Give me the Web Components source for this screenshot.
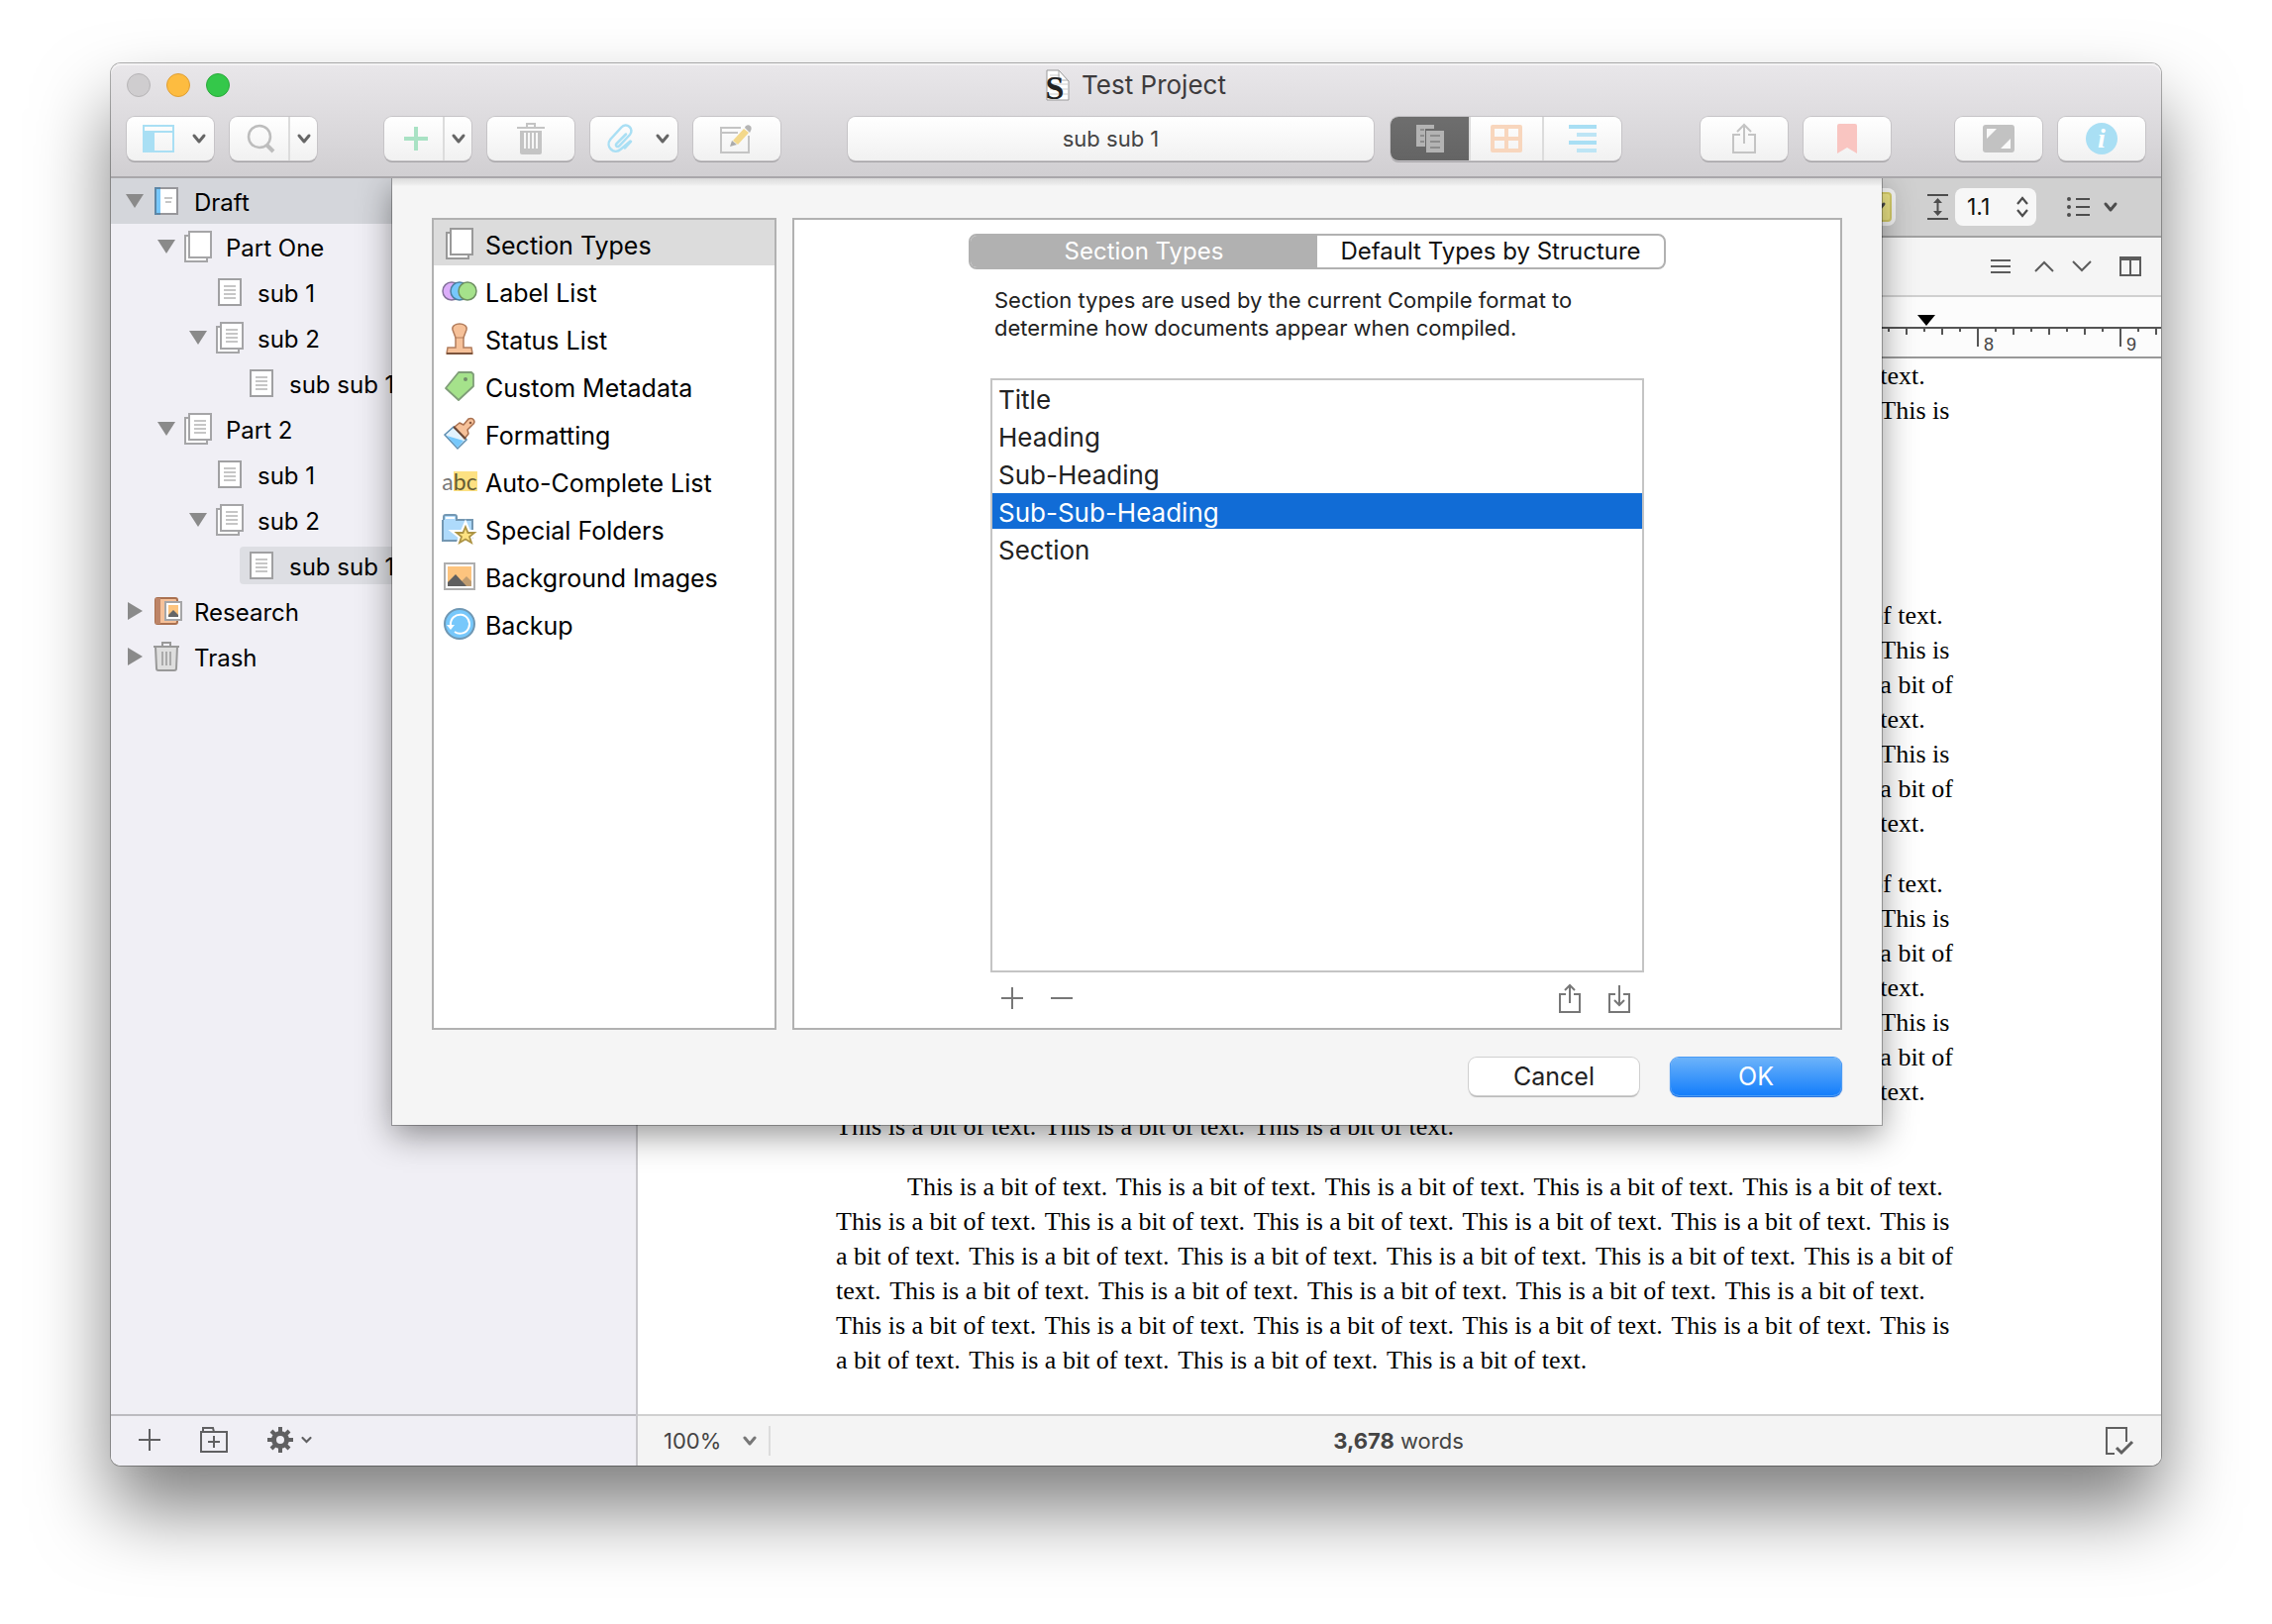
<!DOCTYPE html>
<html lang="en">
<head>
<meta charset="utf-8">
<title>Test Project</title>
<style>
  html, body { margin: 0; background: #fff; }
  body {
    font-family: Inter, "Liberation Sans", sans-serif;
    color: #000;
    box-sizing: border-box;
    min-height: 100vh;
    padding: 64px 112px 160px;
    display: flex;
  }
</style>
</head>
<body>
<project-window></project-window>
<script>
const define = (name, css, html, setup) => {
  const tpl = document.createElement('template');
  tpl.innerHTML = `<style>
    *, ::before, ::after { box-sizing: border-box; }
    button, input, select { font: inherit; color: inherit; margin: 0; padding: 0; border: 0; background: none; outline: 0; appearance: none; }
    ${css}</style>${html}`;
  customElements.define(name, class extends HTMLElement {
    constructor() {
      super();
      this.attachShadow({ mode: 'open' }).append(tpl.content.cloneNode(true));
    }
    connectedCallback() { if (setup) setup(this, this.shadowRoot); }
  });
};

/* ---------- icons: [width, height, markup] ---------- */
const page = (x, y, w, h, c) => `<rect x="${x + 1}" y="${y + 1}" width="${w - 2}" height="${h - 2}" fill="#fff" stroke="${c}" stroke-width="2"/>`;
const lines = (x, y, w) => `<path d="M${x} ${y}h${w}M${x} ${y + 4}h${w}M${x} ${y + 8}h${w}M${x} ${y + 12}h${w}" stroke="#c6c6c6" stroke-width="2"/>`;
const stack = c => page(0, 4, 24, 28, c) + page(4, 0, 24, 28, c);
const ICONS = {
  chevron: [14, 10, '<path d="M2 2l5 6 5-6" fill="none" stroke="currentColor" stroke-width="3" stroke-linecap="round" stroke-linejoin="round"/>'],
  chevronSmall: [11, 8, '<path d="M1.500 2l4 4 4-4" fill="none" stroke="currentColor" stroke-width="2.200" stroke-linecap="round"/>'],
  layout: [32, 28, '<path fill="#a9dff4" fill-rule="evenodd" d="M0 0h32v28H0zM2 2v4h28V2zM12 8v18h18V8z"/>'],
  search: [28, 28, '<circle cx="12" cy="12" r="11" fill="none" stroke="#bdbdbd" stroke-width="2.500"/><path d="M19 20l7 7" stroke="#bdbdbd" stroke-width="4"/>'],
  add: [24, 24, '<path d="M12 0v24M0 12h24" stroke="#a9e2c4" stroke-width="4"/>'],
  trash: [28, 32, '<path d="M10 4V1h8v3" fill="none" stroke="#c4c4c4" stroke-width="2"/><path d="M0 4h28v2H0z" fill="#c4c4c4"/><path fill="#c4c4c4" fill-rule="evenodd" d="M3 8h22v22a2 2 0 0 1-2 2H5a2 2 0 0 1-2-2zM7 10v16h2V10zM11 10v16h2V10zM15 10v16h2V10zM19 10v16h2V10z"/>'],
  clip: [28, 28, '<path d="M25 17l-6 6.500M20 9.500L10.500 19c-1.500 2 .5 4 2.500 2.500L24 10a5.500 5.500 0 0 0-8.500-7.500L4.500 14.500c-6 7.500 3.500 16.500 10.500 10l9.500-8" fill="none" stroke="#a9dff4" stroke-width="2.500" stroke-linecap="round"/>'],
  note: [34, 30, '<path d="M29 12v17H1V4h20M1 9h17" fill="none" stroke="#c4c4c4" stroke-width="2"/><path d="M13 17L24 5l5 4-11 12z" fill="#f3d88b"/><path d="M10 23l2-6 5 4z" fill="#aaa"/><path d="M25 4c1-5 9-3 6 3l-1 2z" fill="#b5b5b5"/>'],
  docs: [28, 28, '<path d="M0 0h18v4h-9v18H0z" fill="#b3b3b3"/><path d="M4 5h4M4 11h4M4 17h4" stroke="#8c8c8c" stroke-width="2"/><path d="M10 6h18v22H10z" fill="#b3b3b3"/><path d="M14 11h10M14 17h10M14 23h10" stroke="#8c8c8c" stroke-width="2"/>'],
  corkboard: [32, 28, '<path fill="#f8d6bd" fill-rule="evenodd" d="M2 0h28a2 2 0 0 1 2 2v24a2 2 0 0 1-2 2H2a2 2 0 0 1-2-2V2a2 2 0 0 1 2-2zM4 4v8h10V4zM18 4v8h10V4zM4 16v8h10v-8zM18 16v8h10v-8z"/>'],
  outline: [28, 28, '<path d="M0 0h28v4H0zM0 16h28v4H0z" fill="#a9dff4"/><path d="M8 8h20v4H8zM8 24h20v4H8z" fill="#bde5f5"/>'],
  share: [24, 30, '<path d="M8 11H1v18h22V11h-7M12 20V2M5 8l7-7 7 7" fill="none" stroke="#c4c4c4" stroke-width="2"/>'],
  bookmark: [20, 30, '<path d="M2 0h16a2 2 0 0 1 2 2v28l-10-6-10 6V2a2 2 0 0 1 2-2z" fill="#f9c5c1"/>'],
  compose: [32, 28, '<rect width="32" height="28" rx="3" fill="#c2c2c2"/><path d="M4 14V4h10zM28 14v10H18z" fill="#fafafa"/>'],
  info: [32, 32, '<circle cx="16" cy="16" r="16" fill="#a9dff4"/><text x="16" y="25" text-anchor="middle" font-family="Liberation Serif, serif" font-style="italic" font-weight="bold" font-size="28" fill="#fff">i</text>'],
  project: [24, 32, '<path d="M1 1h12l10 11v19H1z" fill="#fff" stroke="#999" stroke-width="1"/><path d="M4 6h10M4 10h12M4 15h18M4 20h18M4 25h18" stroke="#ccc" stroke-width="1"/><path d="M13 1v10h9" fill="none" stroke="#aaa" stroke-width="1"/><text x="9" y="30" text-anchor="middle" font-family="Liberation Serif, serif" font-weight="bold" font-size="34" fill="#222">S</text>'],
  disclosureOpen: [18, 14, '<path d="M0 0h18L9 14z" fill="#8a8a8a"/>'],
  disclosure: [18, 18, '<path d="M2 0v18l15-9z" fill="#8a8a8a"/>'],
  draft: [24, 28, page(0, 0, 24, 28, '#97979b') + '<path d="M0 0h6v28H0z" fill="#5d86a5"/><path d="M2 2h4v24H2z" fill="#77c8fb"/><path d="M10 11h8M11 15h6" stroke="#c6c6c6" stroke-width="2"/>'],
  stack: [28, 32, stack('#a5a5a7')],
  stackText: [28, 32, stack('#a5a5a7') + lines(10, 8, 12)],
  text: [24, 28, page(0, 0, 24, 28, '#a0a0a2') + lines(6, 8, 12)],
  research: [28, 28, '<g transform="translate(2)"><rect x="1" y="1" width="22" height="26" rx="2" fill="#f6c199" stroke="#a9704f" stroke-width="2"/><path d="M1 1h5v26H1z" fill="#bd8467"/><path d="M11 5h16v18H11z" fill="#fff" stroke="#a5a5a7" stroke-width="2"/><path d="M14 8h10v12H14z" fill="#fdc47e"/><path d="M14 18l5-5 5 5v2H14z" fill="#666"/></g>'],
  trashSmall: [26, 30, '<path d="M9 4V1h8v3" fill="none" stroke="#999" stroke-width="2"/><path d="M2 5h22l-1 22a2 2 0 0 1-2 2H5a2 2 0 0 1-2-2z" fill="#dedede" stroke="#999" stroke-width="2"/><path d="M0 5h26" stroke="#999" stroke-width="2"/><path d="M9 10v14M13 10v14M17 10v14" stroke="#aaa" stroke-width="2"/>'],
  sections: [28, 32, stack('#999')],
  labels: [36, 20, '<g stroke-width="1.500"><circle cx="10" cy="10" r="9" fill="#dcaefa" stroke="#83719a"/><circle cx="18" cy="10" r="9" fill="#77c8fb" stroke="#4c7f9f"/><circle cx="26" cy="10" r="9" fill="#a5e28b" stroke="#6e8f62"/></g>'],
  stamp: [28, 32, '<path d="M7 7c-2-8 16-8 14 0l-3 8v10h8l1 6H1l1-6h8V15z" fill="#f6c199" stroke="#b27d5d" stroke-width="1.500"/><path d="M9 15h10" stroke="#b27d5d" stroke-width="1"/><path d="M1 31h26" stroke="#7b543d" stroke-width="2"/>'],
  tag: [30, 30, '<path d="M14 1h13l2 2v12L14 29 1 17z" fill="#a5e28b" stroke="#7f9d78" stroke-width="1.800" stroke-linejoin="round"/><circle cx="21" cy="8" r="2" fill="#728c6b"/>'],
  brush: [32, 32, '<path d="M1 17L10 9 23 22l-9 9z" fill="#e3f3fd" stroke="#5d8db0" stroke-width="1.500"/><path d="M3 18l17 5-6 7z" fill="#77c8fb"/><path d="M11 9l5-4 4 2 5-6c5-2 8 3 4 6l-5 5 1 4-4 5z" fill="#f6c199" stroke="#a9704f" stroke-width="1.500" stroke-linejoin="round"/><path d="M10 9l12 12" stroke="#6b4b3a" stroke-width="2"/><circle cx="27" cy="5" r="1.300" fill="#8a5a40"/>'],
  folderStar: [36, 30, '<path d="M1 6V27H31V6H15V3q0-2-2-2H4Q2 1 2 3v3" fill="#aedafb" stroke="#7397b2" stroke-width="2"/><path d="M4 3h9v2H4z" fill="#fff"/><path d="M24 13l2.500 6H33l-5 4 2 6-6-3.500-6 3.500 2-6-5-4h6.500z" fill="#fff" stroke="#fff" stroke-width="6"/><path d="M24 13l2.500 6H33l-5 4 2 6-6-3.500-6 3.500 2-6-5-4h6.500z" fill="#fde281" stroke="#ad9445" stroke-width="1.800"/>'],
  picture: [32, 28, '<path d="M1 1h30v26H1z" fill="#fff" stroke="#aeaeae" stroke-width="2"/><path d="M4 4h24v20H4z" fill="#fdc47e"/><path d="M17 20l6-6 5 5v5H17z" fill="#bf9c70"/><path d="M4 20l8-8 11 12H4z" fill="#5f5f5f"/>'],
  backup: [32, 32, '<circle cx="16" cy="16" r="15" fill="#77c8fb" stroke="#6f97b3" stroke-width="2"/><path d="M7 17a9.500 9.500 0 1 1 4 7" fill="none" stroke="#fff" stroke-width="2"/><path d="M3 17h8l-4 5z" fill="#fff"/>'],
  plusThin: [22, 22, '<path d="M11 0v22M0 11h22" stroke="currentColor" stroke-width="2"/>'],
  minusThin: [22, 22, '<path d="M0 11h22" stroke="currentColor" stroke-width="2"/>'],
  exportUp: [22, 30, '<path d="M7 11H1v18h20V11h-6M11 20V2M6 7l5-5 5 5" fill="none" stroke="currentColor" stroke-width="2"/>'],
  importDown: [22, 30, '<path d="M7 11H1v18h20V11h-6M11 2v20M6 17l5 5 5-5" fill="none" stroke="currentColor" stroke-width="2"/>'],
  folderPlus: [28, 26, '<path d="M1 5h26v20H1zM3 5V1h10l1 4M14 9v12M8 15h12" fill="none" stroke="currentColor" stroke-width="2"/>'],
  gear: [26, 26, '<circle cx="13" cy="13" r="6.500" fill="none" stroke="currentColor" stroke-width="5"/><path d="M13 0v5M13 21v5M0 13h5M21 13h5M4 4l4 4M18 18l4 4M22 4l-4 4M4 22l4-4" stroke="currentColor" stroke-width="4"/>'],
  docCheck: [28, 28, '<path d="M9 27H1V1h20v14" fill="none" stroke="currentColor" stroke-width="2"/><path d="M11 21l5 5 11-11" fill="none" stroke="currentColor" stroke-width="3"/>'],
  lineSpacing: [21, 26, '<path d="M0 1h21M0 25h21M10.500 7v13" stroke="currentColor" stroke-width="2"/><path d="M6 9l4.500-5L15 9zM6 17l4.500 5 4.500-5z" fill="currentColor"/>'],
  stepper: [12, 20, '<path d="M1 7l5-6 5 6M1 13l5 6 5-6" fill="none" stroke="currentColor" stroke-width="2.200"/>'],
  bullets: [23, 20, '<circle cx="2" cy="2" r="2"/><circle cx="2" cy="10" r="2"/><circle cx="2" cy="18" r="2"/><path d="M9 2h14M9 10h14M9 18h14" stroke="currentColor" stroke-width="2"/>'],
  menu: [20, 14, '<path d="M0 1h20M0 7h20M0 13h20" stroke="currentColor" stroke-width="2"/>'],
  up: [20, 12, '<path d="M1 11l9-9 9 9" fill="none" stroke="currentColor" stroke-width="2"/>'],
  down: [20, 12, '<path d="M1 1l9 9 9-9" fill="none" stroke="currentColor" stroke-width="2"/>'],
  split: [22, 20, '<path d="M1 2h20v17H1zM11 2v17" fill="none" stroke="currentColor" stroke-width="2"/><path d="M0 0h22v4H0z" fill="currentColor"/>'],
};
define('app-icon', ':host{display:inline-flex;flex:none} svg{display:block;fill:currentColor;overflow:visible}', '', (el, root) => {
  if (root.querySelector('svg')) return;
  const [w, h, body] = ICONS[el.getAttribute('name')];
  const t = document.createElement('template');
  t.innerHTML = `<svg width="${w}" height="${h}" viewBox="0 0 ${w} ${h}" aria-hidden="true">${body}</svg>`;
  root.append(t.content);
});

/* ---------- toolbar ---------- */
define('tool-button', `
  :host { display: flex; width: 88px; height: 44px; flex: none; border-radius: 8px; color: #666;
    background: linear-gradient(#fff, #f1f1f1); box-shadow: 0 0 0 1px #c6c4c7, 0 2px 0 #a5a3a6; }
  button { flex: 1; display: flex; align-items: center; justify-content: center; }
  :host([menu]) button { justify-content: space-between; padding: 0 8px 0 16px; }
  :host([split]) #main { padding-left: 5px; }
  .more { display: none; }
  :host([split]) .more { display: flex; flex: none; width: 29px; border-left: 2px solid #dcdcdc; }
  :host([menu]) button.more { display: none; }
  .drop { display: none; }
  :host([menu]) .drop { display: inline-flex; }`,
  `<button id="main"><slot></slot><app-icon class="drop" name="chevron"></app-icon></button><button class="more" aria-label="More options"><app-icon name="chevron"></app-icon></button>`,
  (el, root) => root.getElementById('main').setAttribute('aria-label', el.getAttribute('label')));

define('view-switch', `
  :host { display: flex; height: 44px; width: 233px; flex: none; border-radius: 8px; overflow: hidden;
    background: linear-gradient(#fff, #f1f1f1); box-shadow: 0 0 0 1px #c6c4c7, 0 2px 0 #a5a3a6; }
  button { flex: none; width: 79px; display: flex; align-items: center; justify-content: center; }
  button + button { width: 74px; border-left: 2px solid #dcdcdc; }
  button:last-child { flex: 1; }
  button[aria-pressed=true] { background: linear-gradient(#6e6e6e, #646464); }`,
  `<button aria-label="Document" aria-pressed="true"><app-icon name="docs"></app-icon></button><button aria-label="Corkboard"><app-icon name="corkboard"></app-icon></button><button aria-label="Outline"><app-icon name="outline"></app-icon></button>`);

define('title-bar', `
  :host { display: block; padding: 0 16px 16px; background: linear-gradient(#e9e7ea, #d1cfd2);
    border-bottom: 2px solid #a9a7aa; border-radius: 10px 10px 0 0; box-shadow: inset 0 2px 0 #f4f3f4; }
  .title { display: grid; grid-template-columns: 1fr auto 1fr; align-items: center; height: 44px; margin-bottom: 10px; }
  .lights { display: flex; gap: 16px; }
  .lights button { width: 24px; height: 24px; border-radius: 50%; border: 1px solid #b6b4b6; background: #cfcdcf; }
  .lights .min { background: #fdbc40; border-color: #df9f35; }
  .lights .max { background: #34c84a; border-color: #2aa93a; }
  h1 { margin: 0; display: flex; align-items: center; gap: 12px; font-size: 26px; font-weight: 400; color: #3d3b3d; line-height: 32px; }
  .tools, .group { display: flex; }
  .tools { gap: 68px; }
  .group { gap: 16px; }
  .wide { flex: 1; gap: 17px; }
  .end { gap: 65px; margin-left: 12px; }
  input { flex: 1; min-width: 0; height: 44px; border-radius: 8px; text-align: center; font-size: 22px; color: #444;
    background: linear-gradient(#fff, #f1f1f1); box-shadow: 0 0 0 1px #c6c4c7, 0 2px 0 #a5a3a6; }`,
  `<div class="title">
     <div class="lights"><button aria-label="Close"></button><button class="min" aria-label="Minimize"></button><button class="max" aria-label="Zoom"></button></div>
     <h1><app-icon name="project"></app-icon>Test Project</h1><span></span>
   </div>
   <div class="tools">
     <div class="group">
       <tool-button menu label="View"><app-icon name="layout"></app-icon></tool-button>
       <tool-button split label="Search"><app-icon name="search"></app-icon></tool-button>
     </div>
     <div class="group">
       <tool-button split label="Add"><app-icon name="add"></app-icon></tool-button>
       <tool-button label="Move to Trash"><app-icon name="trash"></app-icon></tool-button>
       <tool-button menu label="Attach"><app-icon name="clip"></app-icon></tool-button>
       <tool-button label="Quick Note"><app-icon name="note"></app-icon></tool-button>
     </div>
     <div class="group wide"><input aria-label="Current document" readonly value="sub sub 1"><view-switch></view-switch></div>
     <div class="group end">
       <div class="group">
         <tool-button label="Share"><app-icon name="share"></app-icon></tool-button>
         <tool-button label="Bookmarks"><app-icon name="bookmark"></app-icon></tool-button>
       </div>
       <div class="group">
         <tool-button label="Composition Mode"><app-icon name="compose"></app-icon></tool-button>
         <tool-button label="Inspector"><app-icon name="info"></app-icon></tool-button>
       </div>
     </div>
   </div>`);

/* ---------- binder ---------- */
define('binder-item', `
  :host { display: flex; align-items: center; height: 46px; padding-left: calc(15px + 32px * var(--level, 0)); font-size: 24px; white-space: nowrap; }
  :host([root]) { background: #d4d6db; }
  .twisty { width: 18px; display: flex; flex: none; }
  .label { display: flex; align-items: center; flex: 1; height: 38px; margin-left: 1px; padding-left: 8px; border-radius: 4px; }
  :host([selected]) .label { background: #dddee3; }
  .icon { width: 28px; display: flex; justify-content: center; margin-right: 14px; }
  .name { padding-top: 2px; }`,
  `<span class="twisty"></span><span class="label"><span class="icon"></span><span class="name"><slot></slot></span></span>`,
  (el, root) => {
    el.setAttribute('role', 'treeitem');
    el.style.setProperty('--level', el.getAttribute('level'));
    root.querySelector('.icon').innerHTML = `<app-icon name="${el.getAttribute('icon')}"></app-icon>`;
    const state = el.getAttribute('state');
    if (state) root.querySelector('.twisty').innerHTML = `<app-icon name="${state === 'open' ? 'disclosureOpen' : 'disclosure'}"></app-icon>`;
  });

define('binder-pane', `
  :host { display: flex; flex-direction: column; width: 532px; flex: none; background: #f0eff5; border-right: 2px solid #c9c8cc; }
  .tree { flex: 1; }
  footer { display: flex; align-items: center; height: 52px; padding: 0 0 2px 28px; border-top: 2px solid #bcbbc0; color: #606062; }
  button { display: flex; align-items: center; gap: 8px; margin-right: 40px; }`,
  `<div class="tree" role="tree">
    <binder-item root level="0" state="open" icon="draft">Draft</binder-item>
    <binder-item level="1" state="open" icon="stack">Part One</binder-item>
    <binder-item level="2" icon="text">sub 1</binder-item>
    <binder-item level="2" state="open" icon="stackText">sub 2</binder-item>
    <binder-item level="3" icon="text">sub sub 1</binder-item>
    <binder-item level="1" state="open" icon="stackText">Part 2</binder-item>
    <binder-item level="2" icon="text">sub 1</binder-item>
    <binder-item level="2" state="open" icon="stackText">sub 2</binder-item>
    <binder-item level="3" selected icon="text">sub sub 1</binder-item>
    <binder-item level="0" state="closed" icon="research">Research</binder-item>
    <binder-item level="0" state="closed" icon="trashSmall">Trash</binder-item>
  </div>
  <footer>
    <button aria-label="Add item"><app-icon name="plusThin"></app-icon></button>
    <button aria-label="Add folder"><app-icon name="folderPlus"></app-icon></button>
    <button aria-label="Actions"><app-icon name="gear"></app-icon><app-icon name="chevronSmall"></app-icon></button>
  </footer>`);

/* ---------- editor ---------- */
define('format-bar', `
  :host { display: flex; align-items: center; justify-content: flex-end; height: 60px; padding: 0 44px 0 0; background: #d0d0d0; border-bottom: 2px solid #a2a2a2; color: #4d4d4d; }
  button { display: flex; }
  .mark { width: 60px; height: 38px; padding: 4px; border-radius: 8px; background: #f7f7f7; margin-right: 32px; }
  .mark span { display: flex; flex: 1; height: 30px; align-items: center; justify-content: flex-end; padding-right: 4px; border: 2px solid #d8cf6a; border-radius: 4px; background: #efe788; }
  label { display: flex; align-items: center; gap: 7px; margin-right: 31px; }
  .field { display: flex; align-items: center; justify-content: space-between; width: 82px; height: 38px; padding: 0 8px 0 12px; background: #f7f7f7; border-radius: 8px; }
  input { width: 40px; font-size: 23px; color: #111; }
  .list { align-items: center; gap: 14px; }`,
  `<button class="mark" aria-label="Highlight"><span><app-icon name="chevron"></app-icon></span></button>
   <label><app-icon name="lineSpacing"></app-icon><span class="field"><input aria-label="Line spacing" value="1.1"><app-icon name="stepper"></app-icon></span></label>
   <button class="list" aria-label="List style"><app-icon name="bullets"></app-icon><app-icon name="chevron"></app-icon></button>`);

define('nav-bar', `
  :host { display: flex; align-items: center; justify-content: flex-end; height: 60px; padding-right: 20px; background: #f5f5f5; border-bottom: 2px solid #d0d0d0; color: #5c5c5c; }
  button { display: flex; margin-left: 18px; }
  button:nth-of-type(2) { margin-left: 24px; }
  button:last-of-type { margin-left: 28px; }`,
  `<button aria-label="Menu"><app-icon name="menu"></app-icon></button><button aria-label="Previous"><app-icon name="up"></app-icon></button><button aria-label="Next"><app-icon name="down"></app-icon></button><button aria-label="Split"><app-icon name="split"></app-icon></button>`);

define('text-ruler', `
  :host { display: block; height: 62px; background: #fcfcfc; border-bottom: 2px solid #999; overflow: hidden; }
  .marks { display: flex; align-items: flex-end; height: 30px; padding: 0 0 1px 1292px; }
  .marks i { border: 9px solid transparent; border-top: 11px solid #000; border-bottom: 0; }
  .scale { display: flex; border-top: 2px solid #555; padding-left: 200px; }
  .scale span { flex: none; width: 144px; height: 28px; padding: 7px 0 0 7px; font: 18px/18px "Liberation Sans", sans-serif; color: #444;
    background:
      linear-gradient(#555, #555) 0 0 / 2px 18px no-repeat,
      linear-gradient(90deg, #555 2px, transparent 2px) 0 0 / 36px 6px repeat-x,
      linear-gradient(90deg, #555 2px, transparent 2px) 0 0 / 18px 3px repeat-x; }`,
  `<div class="marks"><i></i></div><div class="scale"></div>`,
  (el, root) => {
    root.querySelector('.scale').innerHTML = Array.from({ length: 10 }, (_, i) => `<span>${i > 7 ? i : ''}</span>`).join('');
  });

/* Sentences are set apart by a word space and a hair space. */
const S = 'This is a bit of text.';
const GAP = ' \u200A';
const rep = n => Array(n).fill(S).join(GAP);
const LINE = {
  indent: rep(5),
  a: rep(5) + GAP + 'This is',
  b: 'a bit of text.' + GAP + rep(4) + GAP + 'This is a bit of',
  c: 'text.' + GAP + rep(5),
};
define('manuscript-text', `
  :host { display: block; flex: 1; min-height: 0; overflow: hidden; padding-left: 200px; background: #fff; }
  p { margin: 0 0 26px; font: 26px/35px "Palatino", "Palatino Linotype", "Liberation Serif", serif; white-space: pre; text-indent: 72px; }
  p.rest { text-indent: 0; margin-bottom: 172px; }`,
  `<p class="rest">${[LINE.c, LINE.a].join('\n')}</p>
   <p>${[LINE.indent, LINE.a, LINE.b, LINE.c, LINE.a, LINE.b, LINE.c].join('\n')}</p>
   <p>${[LINE.indent, LINE.a, LINE.b, LINE.c, LINE.a, LINE.b, LINE.c, rep(3)].join('\n')}</p>
   <p>${[LINE.indent, LINE.a, LINE.b, LINE.c, LINE.a, 'a bit of text.' + GAP + rep(3)].join('\n')}</p>`);

define('editor-pane', `
  :host { display: flex; flex-direction: column; flex: 1; min-width: 0; }
  footer { display: grid; grid-template-columns: 1fr auto 1fr; align-items: center; height: 52px; padding: 0 28px 0 26px; background: #f4f4f4; border-top: 2px solid #d0d0d0; color: #444; font-size: 22px; }
  .zoom { display: flex; align-items: center; height: 30px; width: 108px; border-right: 2px solid #dcdcdc; color: #444; }
  .zoom app-icon { color: #777; }
  select { width: 80px; }
  b { font-weight: 700; }
  button { display: flex; justify-self: end; color: #606060; }`,
  `<format-bar></format-bar><nav-bar></nav-bar><text-ruler></text-ruler><manuscript-text></manuscript-text>
   <footer><span class="zoom"><select aria-label="Zoom"><option>100%</option></select><app-icon name="chevron"></app-icon></span>
   <span><b>3,678</b> words</span><button aria-label="Targets"><app-icon name="docCheck"></app-icon></button></footer>`);

/* ---------- project settings sheet ---------- */
define('category-item', `
  :host { display: block; margin-bottom: 2px; }
  button { display: flex; align-items: center; width: 100%; height: 46px; padding: 2px 8px 0; font-size: 25px; text-align: left; color: #000; }
  :host([selected]) button { background: #dcdcdc; }
  .icon { width: 36px; display: flex; justify-content: center; margin-right: 8px; }
  .name { padding-top: 4px; }
  .abc { font: 23px/20px Lato, sans-serif; color: #777; }
  .abc mark { background: #fde182; color: #665b33; padding: 0; display: inline-block; }`,
  `<button><span class="icon"></span><span class="name"><slot></slot></span></button>`,
  (el, root) => {
    const icon = el.getAttribute('icon');
    root.querySelector('.icon').innerHTML = icon === 'abc' ? '<span class="abc">a<mark>bc</mark></span>' : `<app-icon name="${icon}"></app-icon>`;
  });

define('list-row', `
  :host { display: block; height: 36px; margin-bottom: 2px; padding-left: 6px; font-size: 26px; line-height: 40px; color: #222; }
  :host([selected]) { background: #116cd6; color: #fff; }`,
  `<slot></slot>`, el => el.setAttribute('role', 'option'));

define('settings-sheet', `
  :host { display: flex; flex-direction: column; gap: 28px; padding: 40px 40px 30px;
    background: linear-gradient(#dadada, #e4e4e4 3px, #ececec 6px, #f5f5f5 8px);
    box-shadow: 0 0 0 1px rgba(0,0,0,.28), 0 10px 32px rgba(0,0,0,.42); }
  .panes { display: flex; gap: 16px; min-height: 820px; }
  .pane { border: 2px solid #b1b1b1; background: #fff; }
  .cats { width: 348px; flex: none; }
  .main { flex: 1; display: flex; flex-direction: column; align-items: center; padding-top: 14px; }
  .tabs { display: flex; width: 704px; height: 36px; border: 2px solid #b1b1b1; border-radius: 8px; overflow: hidden; }
  .tabs button { flex: 1; font-size: 24px; line-height: 30px; color: #111; }
  .tabs button[aria-selected=true] { background: #b1b1b1; color: #fff; }
  .body { width: 660px; display: flex; flex-direction: column; }
  p { margin: 17px 0 37px 4px; font-size: 22px; line-height: 28px; color: #222; }
  .list { height: 600px; border: 2px solid #c4c4c4; }
  .tools { display: flex; gap: 28px; align-items: center; padding: 11px 14px 0 11px; color: #777; }
  .tools button { display: flex; }
  .tools .gap { flex: 1; }
  .actions { display: flex; justify-content: flex-end; gap: 32px; padding-right: 1px; }
  .actions button { width: 172px; height: 38px; border-radius: 8px; font-size: 25px; background: #fff; color: #222;
    box-shadow: 0 0 0 1px #cfcfcf, 0 2px 1px #b5b5b5; }
  .actions .ok { color: #fff; background: linear-gradient(#6cb3fa, #147efb); box-shadow: 0 0 0 1px #4a9bf5, 0 1px 1px 1px #1168e0; }`,
  `<div class="panes">
    <nav class="pane cats" aria-label="Settings">
      <category-item selected icon="sections">Section Types</category-item>
      <category-item icon="labels">Label List</category-item>
      <category-item icon="stamp">Status List</category-item>
      <category-item icon="tag">Custom Metadata</category-item>
      <category-item icon="brush">Formatting</category-item>
      <category-item icon="abc">Auto-Complete List</category-item>
      <category-item icon="folderStar">Special Folders</category-item>
      <category-item icon="picture">Background Images</category-item>
      <category-item icon="backup">Backup</category-item>
    </nav>
    <section class="pane main">
      <div class="tabs" role="tablist"><button role="tab" aria-selected="true">Section Types</button><button role="tab">Default Types by Structure</button></div>
      <div class="body">
        <p>Section types are used by the current Compile format to<br>determine how documents appear when compiled.</p>
        <div class="list" role="listbox" aria-label="Section types">
          <list-row>Title</list-row><list-row>Heading</list-row><list-row>Sub-Heading</list-row><list-row selected>Sub-Sub-Heading</list-row><list-row>Section</list-row>
        </div>
        <div class="tools">
          <button aria-label="Add"><app-icon name="plusThin"></app-icon></button><button aria-label="Remove"><app-icon name="minusThin"></app-icon></button>
          <span class="gap"></span>
          <button aria-label="Export"><app-icon name="exportUp"></app-icon></button><button aria-label="Import"><app-icon name="importDown"></app-icon></button>
        </div>
      </div>
    </section>
  </div>
  <div class="actions"><button>Cancel</button><button class="ok">OK</button></div>`);

define('project-window', `
  :host { display: flex; flex-direction: column; flex: 1; min-width: 0; border-radius: 10px;
    box-shadow: 0 0 0 1px rgba(0,0,0,.3), 0 44px 76px rgba(0,0,0,.5); }
  .content { position: relative; flex: 1; display: flex; overflow: hidden; border-radius: 0 0 10px 10px; background: #fff; }
  settings-sheet { position: absolute; top: 0; left: 284px; right: 282px; }`,
  `<title-bar></title-bar><div class="content"><binder-pane></binder-pane><editor-pane></editor-pane><settings-sheet role="dialog" aria-label="Project Settings"></settings-sheet></div>`);
</script>
</body>
</html>
